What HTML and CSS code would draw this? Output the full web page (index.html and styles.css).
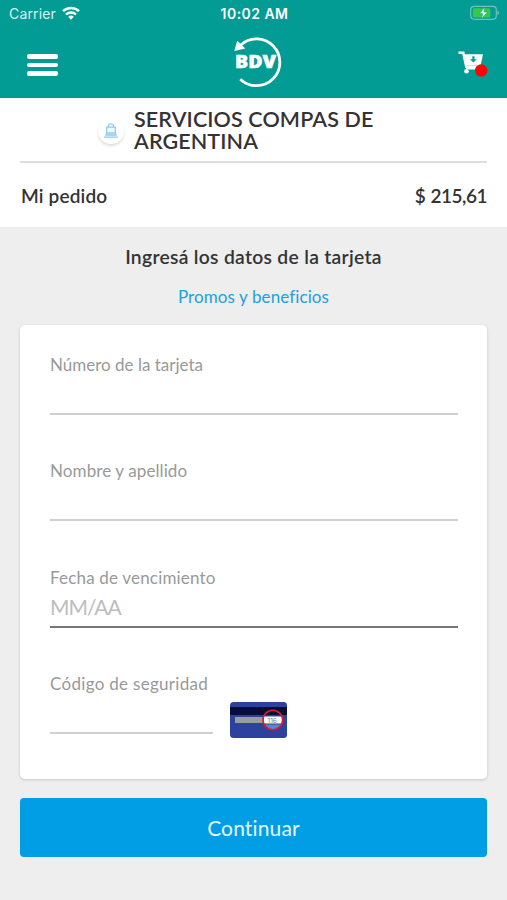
FILE: index.html
```html
<!DOCTYPE html>
<html lang="es">
<head>
<meta charset="utf-8">
<meta name="viewport" content="width=device-width, initial-scale=1">
<title>Pago con tarjeta</title>
<link rel="stylesheet" href="styles.css">
</head>
<body>
<header class="top">
  <div class="status">
    <div class="carrier"><span>Carrier</span>
      <svg class="wifi" viewBox="0 0 18 14" width="18" height="14"><g fill="none" stroke="#fff" stroke-width="2.4"><path d="M1 5.2a11.5 11.5 0 0 1 16 0"/><path d="M4 8.5a7.2 7.2 0 0 1 10 0"/></g><path d="M6.2 10.8a4 4 0 0 1 5.6 0L9 13.8z" fill="#fff"/></svg>
    </div>
    <time class="clock">10:02 AM</time>
    <svg class="battery" viewBox="0 0 30 16" width="30" height="16"><rect x=".7" y="1.3" width="25.6" height="13" rx="3.5" fill="none" stroke="#6fc2bd" stroke-width="1.2"/><rect x="2.8" y="3.2" width="17.5" height="9.2" rx="1.5" fill="#34c94b"/><path d="M27.6 5.5q2.6 2.3 0 4.6z" fill="#8bd0cb"/><path d="M15 2.2 9.5 8.6h3.4L11.5 13.8l5.8-6.7h-3.5z" fill="#fff" stroke="#079d94" stroke-width=".5"/></svg>
  </div>
  <nav class="bar">
    <button class="menu" aria-label="Menú"><i></i><i></i><i></i></button>
    <svg class="logo" viewBox="0 0 52 52" width="52" height="52"><path d="M6.5 9.2A23.4 23.4 0 1 1 6.3 43.2" fill="none" stroke="#fff" stroke-width="2.8"/><path d="M.3 15 3.2 4.8 11.3 12.6z" fill="#fff"/><text x="1" y="31.8" textLength="41" lengthAdjust="spacingAndGlyphs">BDV</text></svg>
    <svg class="cart" viewBox="0 0 32 28" width="32" height="28"><path d="M1.5 2.8h4.8l3 13.8h14" fill="none" stroke="#fff" stroke-width="2.6"/><path d="M7 4.2h19l-2.3 10.8H9z" fill="#fff"/><path d="M10 17.2h13.5v2.4H8.3z" fill="#fff"/><path d="M15.3 6.2h2.2v3h2.4l-3.5 3.4-3.5-3.4h2.4z" fill="#079d94"/><circle cx="9.5" cy="21.3" r="2.3" fill="#fff"/><circle cx="24.2" cy="20.5" r="6.2" fill="#fb0505"/></svg>
  </nav>
</header>
<section class="order">
  <div class="merchant">
    <span class="avatar"><svg viewBox="0 0 16 16" width="16" height="16"><g fill="none" stroke="#8accec" stroke-width="1.2"><path d="M5.5 4V2.8a2.5 2 0 0 1 5 0V4"/><path d="M3.7 12V4.2h8.6V12z" fill="#eef8fd"/><path d="M1 14.2h14M2 12h12"/></g><path d="M4 9h8v4H4z" fill="#a2d9f2"/></svg></span>
    <h1>SERVICIOS COMPAS DE<br>ARGENTINA</h1>
  </div>
  <div class="total"><span class="name">Mi pedido</span><span class="amount">$ 215,61</span></div>
</section>
<main class="payment">
  <h2>Ingresá los datos de la tarjeta</h2>
  <a class="promos">Promos y beneficios</a>
  <form class="card">
    <label class="field"><span class="l-num">Número de la tarjeta</span><input type="text"></label>
    <label class="field"><span class="l-name">Nombre y apellido</span><input type="text"></label>
    <label class="field active"><span class="l-date">Fecha de vencimiento</span><input type="text" placeholder="MM/AA"></label>
    <div class="security">
      <label class="field short"><span class="l-code">Código de seguridad</span><input type="text"></label>
      <svg class="cvv" viewBox="0 0 57 36" width="57" height="36"><rect width="57" height="36" rx="3.5" fill="#2d429d"/><path d="M0 5h57v8H0z" fill="#070c39"/><path d="M5 15h29v6H5z" fill="#9b9ca0"/><path d="M34 14.5h18v7H34z" fill="#fff"/><path d="M35 22.5h16a9 9 0 0 1-16 0" fill="#5786d3"/><circle cx="42.8" cy="18" r="9.8" fill="none" stroke="#df1930" stroke-width="1.6"/><text x="37.5" y="20.6">116</text></svg>
    </div>
  </form>
  <button class="submit">Continuar</button>
</main>
</body>
</html>
```
FILE: styles.css
```css
* { box-sizing: border-box; }
body { margin: 0; min-height: 900px; background: #eee; color: #333; font-family: Lato, "Open Sans", sans-serif; font-variant-ligatures: none; }
button { border: 0; padding: 0; font: inherit; }
h1, h2 { margin: 0; }
.top { height: 98px; background: #039c94; color: #fff; }
.status { height: 28px; padding: 0 7px 0 9px; display: grid; grid-template-columns: 1fr auto 1fr; align-items: center; font: 14px/28px Inter, sans-serif; }
.carrier { display: flex; align-items: center; gap: 6px; color: #d9f3f1; letter-spacing: .15px; }
.wifi { margin-top: -2px; }
.clock { font-weight: 600; font-size: 14px; letter-spacing: .45px; }
.battery { justify-self: end; margin-top: -2px; }
.bar { height: 70px; padding: 0 18px 0 27px; display: grid; grid-template-columns: 1fr auto 1fr; align-items: start; }
.menu { margin-top: 26px; width: 31px; display: grid; gap: 4px; background: none; }
.menu i { height: 4.6px; border-radius: 2px; background: #fff; }
.logo { margin: 8px 0 0 3px; }
.logo text { font: 900 17.5px "Open Sans", sans-serif; fill: #fff; stroke: #fff; stroke-width: .5px; }
.cart { justify-self: end; margin-top: 22px; }
.order { height: 129px; padding: 0 20px; background: #fff; }
.merchant { height: 65px; padding: 10px 0 0 78px; display: flex; gap: 10px; border-bottom: 2px solid #dedede; }
.avatar { width: 26px; height: 26px; margin-top: 10px; display: grid; place-items: center; border-radius: 50%; box-shadow: 0 2px 3px #ddd; }
h1 { font-size: 21.5px; line-height: 22px; font-weight: 600; letter-spacing: .12px; white-space: nowrap; }
.total { height: 64px; padding-left: 1px; display: flex; align-items: center; justify-content: space-between; font-size: 19px; font-weight: 600; }
.name { letter-spacing: .15px; }
.amount { letter-spacing: -.5px; word-spacing: 1px; }
.payment { padding: 18px 20px 0; display: flex; flex-direction: column; align-items: stretch; text-align: center; }
h2 { font-size: 19.3px; line-height: 24px; font-weight: 600; letter-spacing: .3px; }
.promos { margin-top: 18px; font-size: 17px; line-height: 20px; letter-spacing: .1px; color: #229fdf; }
.card { height: 454px; margin-top: 18px; padding: 28px 29px 0 30px; border-radius: 5px; background: #fff; box-shadow: 0 1px 3px #c6c6c6; text-align: left; }
.field { display: block; height: 106.3px; color: #999; font-size: 17px; line-height: 23px; }
.field span { display: block; height: 24px; white-space: nowrap; }
input { display: block; width: 100%; height: 38px; padding: 0 0 3px; border: 0; border-bottom: 2px solid #d0d0d0; border-radius: 0; outline: 0; background: transparent; font: 21px/30px Lato, sans-serif; letter-spacing: -1px; color: #333; }
input::placeholder { color: #bdbdbd; opacity: 1; }
.l-name { letter-spacing: .1px; }
.l-date { letter-spacing: .18px; }
.l-code { letter-spacing: .3px; }
.active input { border-color: #777; }
.security { display: flex; gap: 17px; }
.short { width: 163px; }
.cvv { margin-top: 30px; }
.cvv text { font: 6.5px Inter, sans-serif; fill: #777; }
.submit { height: 59px; margin-top: 19px; border-radius: 4px; background: #019ee5; color: #e5f7ff; font-size: 21px; letter-spacing: .15px; }
```
